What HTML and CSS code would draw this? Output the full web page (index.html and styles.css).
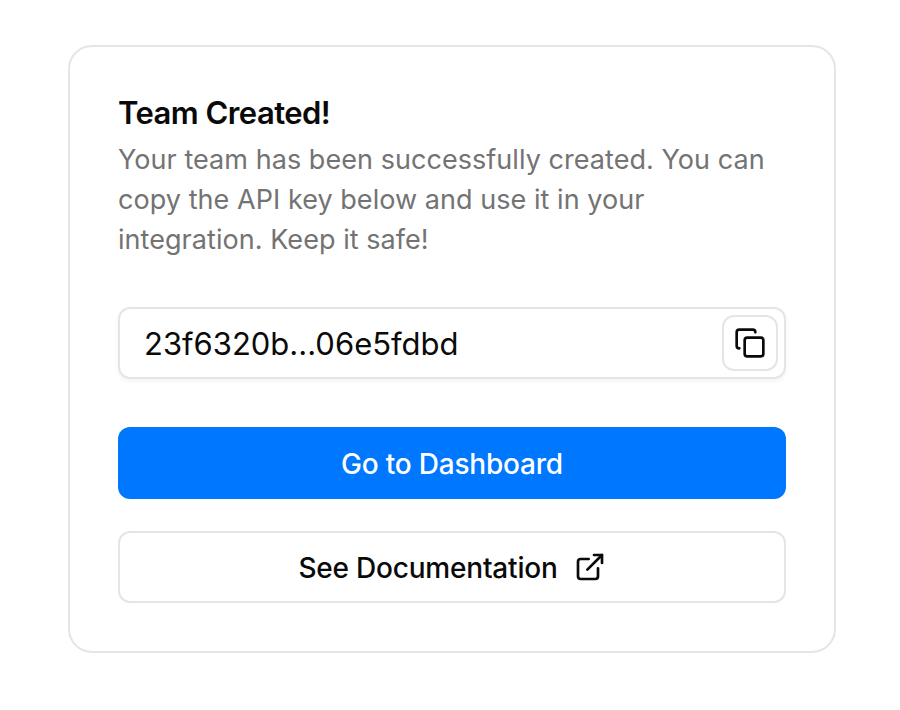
FILE: index.html
```html
<!DOCTYPE html>
<html lang="en">
<head>
<meta charset="utf-8">
<title>Team Created</title>
<link rel="stylesheet" href="styles.css">
</head>
<body>
<main class="card">
  <header class="intro">
    <h1 class="title">Team Created!</h1>
    <p class="desc">Your team has been successfully created. You can copy the API key below and use it in your integration. Keep it safe!</p>
  </header>
  <div class="key-field">
    <span class="key-text">23f6320b...06e5fdbd</span>
    <button class="copy-btn" type="button" aria-label="Copy">
      <svg class="icon" width="32" height="32" viewBox="0 0 24 24" fill="none" stroke="currentColor" stroke-width="2" stroke-linecap="round" stroke-linejoin="round"><rect x="8" y="8" width="14" height="14" rx="2"/><path d="M4 16c-1.1 0-2-.9-2-2V4c0-1.1.9-2 2-2h10c1.1 0 2 .9 2 2"/></svg>
    </button>
  </div>
  <div class="actions">
    <button class="btn btn-primary" type="button">Go to Dashboard</button>
    <button class="btn btn-secondary" type="button">See Documentation
      <svg class="icon ext-icon" width="32" height="32" viewBox="0 0 24 24" fill="none" stroke="currentColor" stroke-width="2" stroke-linecap="round" stroke-linejoin="round"><path d="M18 13v6a2 2 0 0 1-2 2H5a2 2 0 0 1-2-2V8a2 2 0 0 1 2-2h6"/><path d="M15 3h6v6"/><path d="M10 14 21 3"/></svg>
    </button>
  </div>
</main>
</body>
</html>
```
FILE: styles.css
```css
* { box-sizing: border-box; }
html, body { margin: 0; background: #fff; }
body {
  padding: 45px 64px 57px 68px;
  font-family: Inter, "Liberation Sans", sans-serif;
  color: #0a0a0a;
}
.card {
  width: 768px;
  height: 608px;
  padding: 48px;
  border: 2px solid #e5e5e5;
  border-radius: 24px;
  background: #fff;
  display: flex;
  flex-direction: column;
  gap: 48px;
}
.intro { display: flex; flex-direction: column; gap: 9px; margin-bottom: -1px; }
.title {
  margin: 0;
  font-size: 31px;
  line-height: 36px;
  font-weight: 600;
  letter-spacing: -0.55px;
}
.desc {
  margin: 0;
  font-size: 27px;
  line-height: 40px;
  letter-spacing: 0.05px;
  color: #737373;
}
.key-field {
  height: 72px;
  padding: 0 6px 0 24px;
  border: 2px solid #e5e5e5;
  border-radius: 12px;
  box-shadow: 0 2px 4px rgba(0,0,0,.05);
  display: flex;
  align-items: center;
  justify-content: space-between;
}
.key-text { font-size: 31px; line-height: 40px; padding-top: 2px; }
.copy-btn {
  width: 56px;
  height: 56px;
  padding: 0;
  border: 2px solid #e5e5e5;
  border-radius: 12px;
  background: #fff;
  color: #0a0a0a;
  display: flex;
  align-items: center;
  justify-content: center;
}
.actions { display: flex; flex-direction: column; gap: 32px; }
.btn {
  height: 72px;
  padding-top: 2px;
  border-radius: 12px;
  font-family: inherit;
  font-size: 28px;
  letter-spacing: -0.2px;
  font-weight: 500;
  display: flex;
  align-items: center;
  justify-content: center;
  gap: 16px;
}
.ext-icon { margin-bottom: 2px; }
.btn-primary { border: 0; background: #0077ff; color: #fff; }
.btn-secondary { border: 2px solid #e5e5e5; background: #fff; color: #0a0a0a; }
```
